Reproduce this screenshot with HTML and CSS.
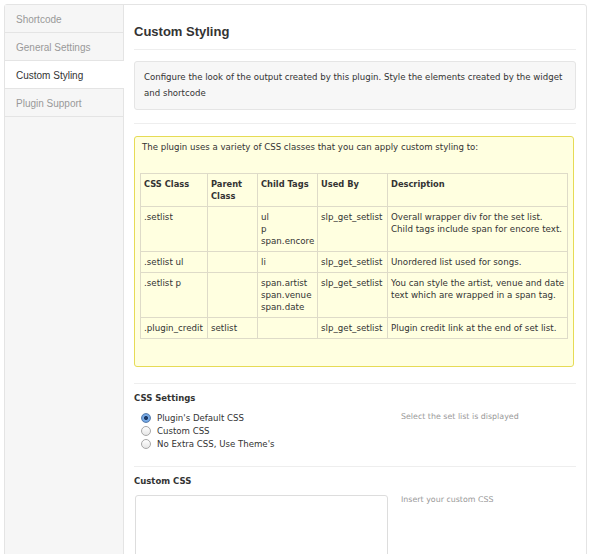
FILE: index.html
```html
<!DOCTYPE html>
<html lang="en">
<head>
  <meta charset="UTF-8">
  <link rel="stylesheet" href="styles.css">
</head>
<body>
  <div class="wrap">
    <ul class="tabs">
      <li class="tab">Shortcode</li>
      <li class="tab">General Settings</li>
      <li class="tab active">Custom Styling</li>
      <li class="tab">Plugin Support</li>
    </ul>
    <div class="panel">
      <h2 class="title">Custom Styling</h2>
      <div class="section intro-wrap">
        <div class="intro">Configure the look of the output created by this plugin. Style the elements created by the widget and shortcode</div>
      </div>
      <div class="section notice-wrap">
        <div class="notice">
          <p>The plugin uses a variety of CSS classes that you can apply custom styling to:</p>
          <table class="classes">
            <colgroup>
              <col class="c-class">
              <col class="c-parent">
              <col class="c-child">
              <col class="c-used">
              <col class="c-desc">
            </colgroup>
            <tr>
              <th>CSS Class</th>
              <th>Parent Class</th>
              <th>Child Tags</th>
              <th>Used By</th>
              <th>Description</th>
            </tr>
            <tr>
              <td>.setlist</td>
              <td></td>
              <td>ul<br>p<br>span.encore</td>
              <td>slp_get_setlist</td>
              <td>Overall wrapper div for the set list.<br>Child tags include span for encore text.</td>
            </tr>
            <tr>
              <td>.setlist ul</td>
              <td></td>
              <td>li</td>
              <td>slp_get_setlist</td>
              <td>Unordered list used for songs.</td>
            </tr>
            <tr>
              <td>.setlist p</td>
              <td></td>
              <td>span.artist<br>span.venue<br>span.date</td>
              <td>slp_get_setlist</td>
              <td>You can style the artist, venue and date<br>text which are wrapped in a span tag.</td>
            </tr>
            <tr>
              <td>.plugin_credit</td>
              <td>setlist</td>
              <td></td>
              <td>slp_get_setlist</td>
              <td>Plugin credit link at the end of set list.</td>
            </tr>
          </table>
        </div>
      </div>
      <div class="section field">
        <div class="field-main">
          <h3 class="field-title">CSS Settings</h3>
          <label class="choice"><input type="radio" name="css" checked> Plugin's Default CSS</label>
          <label class="choice"><input type="radio" name="css"> Custom CSS</label>
          <label class="choice"><input type="radio" name="css"> No Extra CSS, Use Theme's</label>
        </div>
        <div class="field-help">Select the set list is displayed</div>
      </div>
      <div class="section field last">
        <div class="field-main">
          <h3 class="field-title">Custom CSS</h3>
          <textarea class="css-box"></textarea>
        </div>
        <div class="field-help">Insert your custom CSS</div>
      </div>
    </div>
  </div>
</body>
</html>
```

FILE: styles.css
```css
* {
  margin: 0;
  padding: 0;
  box-sizing: border-box;
}
html, body {
  background-color: #fff;
}
body {
  padding: 4px 3px 0 4px;
  font-family: "DejaVu Sans", Verdana, sans-serif;
  font-size: 8.6px;
  color: #333;
  overflow: hidden;
}
.wrap {
  display: flex;
  min-height: 600px;
  border: 1px solid #e4e4e4;
  border-radius: 3px;
}
/* 左侧选项卡 */
.tabs {
  list-style: none;
  flex: 0 0 119px;
  background-color: #f6f6f6;
  border-right: 1px solid #e4e4e4;
}
.tab {
  height: 28px;
  padding: 1px 0 0 11px;
  line-height: 27px;
  border-bottom: 1px solid #e4e4e4;
  font-family: "Liberation Sans", Arial, sans-serif;
  font-size: 10px;
  color: #999;
}
.tab.active {
  margin-right: -1px;
  background-color: #fff;
  color: #333;
}
/* 右侧内容 */
.panel {
  flex: 1;
  padding: 19px 10px 0 10px;
}
.title {
  padding-bottom: 9px;
  border-bottom: 1px solid #eee;
  line-height: 16px;
  font-family: "Liberation Sans", Arial, sans-serif;
  font-size: 13px;
  color: #333;
}
.section {
  border-bottom: 1px solid #eee;
}
.intro-wrap {
  padding: 11px 0 13px;
}
.intro {
  padding: 7px 9px 8px;
  line-height: 16px;
  background-color: #f7f7f7;
  border: 1px solid #e5e5e5;
  border-radius: 3px;
}
.notice-wrap {
  padding: 12px 2px 16px 0;
}
.notice {
  padding: 4px 5px 27px;
  background-color: #ffffe0;
  border: 1px solid #e6db55;
  border-radius: 3px;
}
.notice p {
  margin: 0 2px 20px;
  line-height: 12px;
}
.classes {
  width: 100%;
  border-collapse: collapse;
  font-size: 8.7px;
}
.classes th, .classes td {
  padding: 4px 2px 4px 3px;
  line-height: 12px;
  text-align: left;
  vertical-align: top;
  white-space: nowrap;
  border: 1px solid #dedbc8;
}
.classes th {
  font-size: 8.3px;
  font-weight: bold;
  white-space: normal;
}
.c-class { width: 67px; }
.c-parent { width: 50px; }
.c-child { width: 60px; }
.c-used { width: 70px; }
/* 表单项 */
.field {
  display: flex;
  padding: 8px 0 16px;
}
.field.last {
  border-bottom: 0;
}
.field-main {
  flex: 0 0 267px;
}
.field-title {
  margin-bottom: 7px;
  line-height: 12px;
  font-size: 8.5px;
  font-weight: bold;
}
.choice {
  display: flex;
  align-items: center;
  height: 13px;
  padding-left: 7px;
}
.choice input {
  appearance: none;
  width: 10px;
  height: 10px;
  margin-right: 6px;
  border: 1px solid #a8a8a8;
  border-radius: 50%;
  background: linear-gradient(#fff, #e6e6e6);
}
.choice input:checked {
  border-color: #5a7fae;
  background: radial-gradient(circle, #1d3a66 0 1.6px, #7fb0e8 2.4px, #4f8ad2 100%);
}
.field-help {
  padding-top: 20px;
  font-size: 7.9px;
  color: #999;
}
.css-box {
  display: block;
  width: 253px;
  height: 120px;
  margin: 8px 0 0 1px;
  border: 1px solid #ddd;
  border-radius: 3px;
  resize: none;
}
```
